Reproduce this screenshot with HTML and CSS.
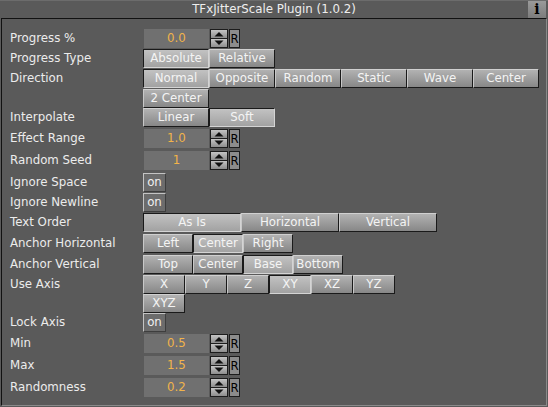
FILE: index.html
```html
<!DOCTYPE html>
<html>
<head>
<meta charset="utf-8">
<link rel="stylesheet" href="styles.css">
</head>
<body>
<div class="window">
  <div class="titlebar">
    <span class="title">TFxJitterScale Plugin (1.0.2)</span>
    <span class="info">i</span>
  </div>
  <div class="panel">
    <div class="row">
      <div class="label">Progress %</div>
      <div class="spin"><div class="val">0.0</div><svg class="arrows" width="18" height="19" viewBox="0 0 18 19"><rect width="18" height="19" fill="#1c1c1c"/><rect x="1" y="1" width="16" height="8" fill="url(#g)"/><rect x="1" y="10" width="16" height="8" fill="url(#g)"/><polygon points="4.5,7.5 9,3 13.5,7.5" fill="#111"/><polygon points="4.5,11.5 13.5,11.5 9,16" fill="#111"/><defs><linearGradient id="g" x1="0" y1="0" x2="0" y2="1"><stop offset="0" stop-color="#c4c4c4"/><stop offset="1" stop-color="#8e8e8e"/></linearGradient></defs></svg><div class="r">R</div></div>
    </div>
    <div class="row">
      <div class="label">Progress Type</div>
      <div class="group"><div class="btn w66 sel">Absolute</div><div class="btn w66">Relative</div></div>
    </div>
    <div class="row m0">
      <div class="label">Direction</div>
      <div class="group wrap"><div class="btn w66 sel">Normal</div><div class="btn w66">Opposite</div><div class="btn w66">Random</div><div class="btn w66">Static</div><div class="btn w66">Wave</div><div class="btn w66">Center</div><div class="btn w66">2 Center</div></div>
    </div>
    <div class="row m2">
      <div class="label">Interpolate</div>
      <div class="group"><div class="btn w66">Linear</div><div class="btn w66 sel">Soft</div></div>
    </div>
    <div class="row m3">
      <div class="label">Effect Range</div>
      <div class="spin"><div class="val">1.0</div><svg class="arrows" width="18" height="19" viewBox="0 0 18 19"><rect width="18" height="19" fill="#1c1c1c"/><rect x="1" y="1" width="16" height="8" fill="url(#g)"/><rect x="1" y="10" width="16" height="8" fill="url(#g)"/><polygon points="4.5,7.5 9,3 13.5,7.5" fill="#111"/><polygon points="4.5,11.5 13.5,11.5 9,16" fill="#111"/></svg><div class="r">R</div></div>
    </div>
    <div class="row m3">
      <div class="label">Random Seed</div>
      <div class="spin"><div class="val">1</div><svg class="arrows" width="18" height="19" viewBox="0 0 18 19"><rect width="18" height="19" fill="#1c1c1c"/><rect x="1" y="1" width="16" height="8" fill="url(#g)"/><rect x="1" y="10" width="16" height="8" fill="url(#g)"/><polygon points="4.5,7.5 9,3 13.5,7.5" fill="#111"/><polygon points="4.5,11.5 13.5,11.5 9,16" fill="#111"/></svg><div class="r">R</div></div>
    </div>
    <div class="row">
      <div class="label">Ignore Space</div>
      <div class="toggle">on</div>
    </div>
    <div class="row">
      <div class="label">Ignore Newline</div>
      <div class="toggle">on</div>
    </div>
    <div class="row m2">
      <div class="label">Text Order</div>
      <div class="group"><div class="btn w98 sel">As Is</div><div class="btn w98">Horizontal</div><div class="btn w98">Vertical</div></div>
    </div>
    <div class="row m2">
      <div class="label">Anchor Horizontal</div>
      <div class="group"><div class="btn w50">Left</div><div class="btn w50 sel">Center</div><div class="btn w50">Right</div></div>
    </div>
    <div class="row">
      <div class="label">Anchor Vertical</div>
      <div class="group"><div class="btn w50">Top</div><div class="btn w50">Center</div><div class="btn w50 sel">Base</div><div class="btn w50">Bottom</div></div>
    </div>
    <div class="row m0">
      <div class="label">Use Axis</div>
      <div class="group wrap axis"><div class="btn w42">X</div><div class="btn w42">Y</div><div class="btn w42">Z</div><div class="btn w42 sel">XY</div><div class="btn w42">XZ</div><div class="btn w42">YZ</div><div class="btn w42">XYZ</div></div>
    </div>
    <div class="row m2">
      <div class="label">Lock Axis</div>
      <div class="toggle">on</div>
    </div>
    <div class="row m3">
      <div class="label">Min</div>
      <div class="spin"><div class="val">0.5</div><svg class="arrows" width="18" height="19" viewBox="0 0 18 19"><rect width="18" height="19" fill="#1c1c1c"/><rect x="1" y="1" width="16" height="8" fill="url(#g)"/><rect x="1" y="10" width="16" height="8" fill="url(#g)"/><polygon points="4.5,7.5 9,3 13.5,7.5" fill="#111"/><polygon points="4.5,11.5 13.5,11.5 9,16" fill="#111"/></svg><div class="r">R</div></div>
    </div>
    <div class="row m3">
      <div class="label">Max</div>
      <div class="spin"><div class="val">1.5</div><svg class="arrows" width="18" height="19" viewBox="0 0 18 19"><rect width="18" height="19" fill="#1c1c1c"/><rect x="1" y="1" width="16" height="8" fill="url(#g)"/><rect x="1" y="10" width="16" height="8" fill="url(#g)"/><polygon points="4.5,7.5 9,3 13.5,7.5" fill="#111"/><polygon points="4.5,11.5 13.5,11.5 9,16" fill="#111"/></svg><div class="r">R</div></div>
    </div>
    <div class="row">
      <div class="label">Randomness</div>
      <div class="spin"><div class="val">0.2</div><svg class="arrows" width="18" height="19" viewBox="0 0 18 19"><rect width="18" height="19" fill="#1c1c1c"/><rect x="1" y="1" width="16" height="8" fill="url(#g)"/><rect x="1" y="10" width="16" height="8" fill="url(#g)"/><polygon points="4.5,7.5 9,3 13.5,7.5" fill="#111"/><polygon points="4.5,11.5 13.5,11.5 9,16" fill="#111"/></svg><div class="r">R</div></div>
    </div>
  </div>
</div>
</body>
</html>
```

FILE: styles.css
```css
html, body {
  margin: 0;
  padding: 0;
  background: #5a5a5a;
}
.window {
  width: 548px;
  height: 407px;
  box-sizing: border-box;
  background: #5a5a5a;
  font-family: "DejaVu Sans", sans-serif;
  font-size: 11.8px;
  color: #ececec;
  display: flex;
  flex-direction: column;
}
.titlebar {
  height: 18px;
  box-sizing: border-box;
  border-top: 1px solid #6c6c6c;
  position: relative;
  text-align: center;
  line-height: 17px;
  color: #eeeeee;
}
.info {
  position: absolute;
  right: 2px;
  top: 0;
  width: 18px;
  height: 17px;
  background: linear-gradient(#9a9a9a, #7c7c7c);
  color: #000;
  font-family: "DejaVu Serif", "Liberation Serif", serif;
  font-weight: bold;
  font-size: 14px;
  line-height: 17px;
  text-align: center;
}
.panel {
  flex: 1;
  margin-left: 1px;
  border-top: 1px solid #111;
  border-left: 1px solid #111;
  border-right: 1px solid #8a8a8a;
  border-bottom: 1px solid #8a8a8a;
  padding: 10px 0 0 8px;
  margin-right: 1px;
  margin-bottom: 1px;
}
.row {
  display: flex;
  align-items: flex-start;
  margin-bottom: 1px;
}
.row.m0 { margin-bottom: 0; }
.row.m2 { margin-bottom: 2px; }
.row.m3 { margin-bottom: 3px; }
.label {
  width: 133px;
  flex: none;
  height: 19px;
  line-height: 19px;
  white-space: nowrap;
}
.group {
  display: flex;
}
.group.wrap {
  flex-wrap: wrap;
  width: 396px;
  row-gap: 1px;
}
.group.axis {
  width: 252px;
  row-gap: 0;
}
.btn {
  box-sizing: border-box;
  height: 19px;
  border: 1px solid;
  border-color: #d0d0d0 #1a1a1a #1a1a1a #c8c8c8;
  background: linear-gradient(#b2b2b2, #878787);
  color: #f4f4f4;
  text-align: center;
  line-height: 17px;
  white-space: nowrap;
}
.btn.sel {
  border-color: #1a1a1a #d4d4d4 #d4d4d4 #1a1a1a;
  background: linear-gradient(#c2c2c2, #a2a2a2);
}
.w66 { width: 66px; }
.w98 { width: 98px; }
.w50 { width: 50px; }
.w42 { width: 42px; }
.spin {
  display: flex;
  align-items: flex-start;
}
.val {
  margin-left: 1px;
  width: 65px;
  height: 19px;
  background: #707070;
  color: #f2b44a;
  text-align: center;
  line-height: 19px;
}
.arrows {
  display: block;
  margin-left: 1px;
}
.r {
  margin-left: 1px;
  width: 11px;
  height: 19px;
  box-sizing: border-box;
  border: 1px solid #1c1c1c;
  background: #8c8c8c;
  color: #000;
  font-family: "DejaVu Sans Condensed", "DejaVu Sans", sans-serif;
  font-size: 13px;
  line-height: 17px;
  text-align: center;
  overflow: hidden;
}
.toggle {
  box-sizing: border-box;
  width: 23px;
  height: 19px;
  border: 1px solid;
  border-color: #c4c4c4 #3e3e3e #3e3e3e #c4c4c4;
  background: #6c6c6c;
  color: #f0f0f0;
  text-align: center;
  line-height: 17px;
}
```
